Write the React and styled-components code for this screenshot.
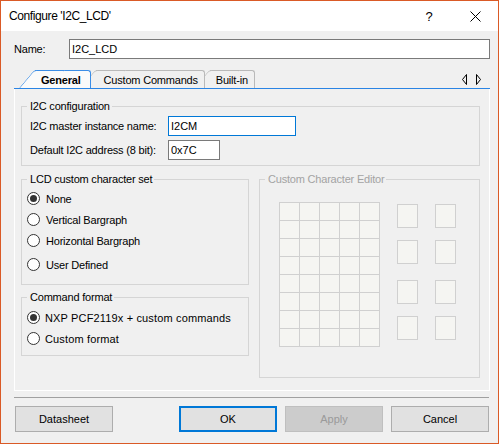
import React from 'react';
import styled, { createGlobalStyle, css } from 'styled-components';

const GlobalStyle = createGlobalStyle`
  html, body { margin: 0; padding: 0; background: #fff; }
  body {
    font-family: "Liberation Sans", Arial, sans-serif;
    font-size: 11px;
    color: #000;
  }
  * { box-sizing: border-box; }
`;

const Window = styled.div`
  width: 499px;
  height: 444px;
  border: 1px solid #da5a26;
  display: flex;
  flex-direction: column;
  background: #f0f0f0;
`;

const TitleBar = styled.div`
  height: 30px;
  flex: none;
  background: #fff;
  display: flex;
  align-items: center;
  padding-left: 8px;
`;

const Title = styled.span`
  flex: 1;
  font-size: 12px;
  letter-spacing: -0.4px;
`;

const CaptionButton = styled.div`
  width: 46px;
  height: 30px;
  display: flex;
  align-items: center;
  justify-content: center;
  font-size: 13px;
`;

const Body = styled.div`
  flex: 1;
  display: flex;
  flex-direction: column;
  padding: 8px 8px 0 13px;
`;

const NameRow = styled.div`
  display: flex;
  align-items: center;
  height: 20px;
`;

const NameLabel = styled.label`
  width: 55px;
  letter-spacing: -0.2px;
`;

const TextInput = styled.input`
  height: 20px;
  width: ${(p) => (p.$w ? `${p.$w}px` : 'auto')};
  flex: ${(p) => (p.$w ? 'none' : 1)};
  border: 1px solid ${(p) => (p.$focused ? '#0078d7' : '#7a7a7a')};
  background: #fff;
  padding: 0 2px;
  font: inherit;
  font-size: 11px;
  color: #000;
  outline: none;
`;

const TabStrip = styled.div`
  margin-top: 11px;
  display: flex;
  align-items: flex-end;
  padding-left: 21px;
  border-bottom: 1px solid #2a84e4;
`;

const Tab = styled.div`
  position: relative;
  z-index: ${(p) => p.$z};
  height: 18px;
  margin-left: ${(p) => p.$ml}px;
  padding: 0 ${(p) => p.$pr}px 0 ${(p) => p.$pl}px;
  display: flex;
  align-items: center;
  letter-spacing: -0.2px;
  font-weight: ${(p) => (p.$active ? 700 : 400)};
  background: ${(p) => (p.$active ? '#fafafa' : '#f0f0f0')};
  border-top: 1px solid ${(p) => (p.$active ? '#3b8de6' : '#b9b9b9')};
  border-right: 1px solid ${(p) => (p.$active ? '#3b8de6' : '#b9b9b9')};
  border-top-right-radius: 3px;

  &::before {
    content: '';
    position: absolute;
    z-index: -1;
    top: -1px;
    bottom: 0;
    left: -16px;
    width: 30px;
    background: inherit;
    border-left: 1px solid ${(p) => (p.$active ? '#3b8de6' : '#b9b9b9')};
    border-top: 1px solid ${(p) => (p.$active ? '#3b8de6' : '#b9b9b9')};
    border-top-left-radius: 3px;
    transform: skewX(-40deg);
    transform-origin: bottom left;
  }
`;

const TabArrows = styled.svg`
  margin-left: auto;
  margin-right: 8px;
  align-self: center;
  flex: none;
`;

const TabPage = styled.div`
  height: 302px;
  flex: none;
  border: 1px solid #fff;
  border-top: none;
  padding: 11px 9px 0 6px;
  display: grid;
  grid-template-columns: 228px 221px;
  column-gap: 10px;
  row-gap: 7px;
  align-content: start;
  align-items: start;
`;

const Group = styled.fieldset`
  margin: 0;
  min-width: 0;
  border: 1px solid #d5d5d5;
  padding: ${(p) => p.$pad};
  grid-column: ${(p) => (p.$span ? '1 / -1' : 'auto')};
`;

const Legend = styled.legend`
  padding: 0 2px 0 3px;
  line-height: 13px;
  letter-spacing: -0.2px;
  color: ${(p) => (p.$disabled ? '#a3a3a3' : '#000')};
`;

const FieldGrid = styled.div`
  display: grid;
  grid-template-columns: 138px auto;
  row-gap: 4px;
  align-items: center;
  padding-left: 3px;
`;

const FieldLabel = styled.label`
  letter-spacing: -0.2px;
`;

const LeftStack = styled.div`
  display: flex;
  flex-direction: column;
  gap: 6px;
`;

const RadioRow = styled.div`
  height: 21px;
  margin-top: ${(p) => p.$mt || 0}px;
  display: flex;
  align-items: center;
`;

const RadioDot = styled.span`
  position: relative;
  flex: none;
  width: 13px;
  height: 13px;
  border-radius: 50%;
  border: 1px solid #333;
  background: #fff;
  ${(p) =>
    p.$checked &&
    css`
      &::after {
        content: '';
        position: absolute;
        left: 2px;
        top: 2px;
        width: 7px;
        height: 7px;
        border-radius: 50%;
        background: #333;
      }
    `}
`;

const RadioText = styled.span`
  margin-left: ${(p) => (p.$wide ? 5 : 6)}px;
  letter-spacing: ${(p) => (p.$wide ? '0.15px' : '-0.2px')};
`;

const EditorBody = styled.div`
  display: flex;
  align-items: flex-start;
  padding-left: 14px;
`;

const CharGrid = styled.div`
  display: grid;
  grid-template-columns: repeat(5, 19px);
  grid-auto-rows: 17px;
  gap: 1px;
  border: 1px solid #d0d0d0;
  background: #d0d0d0;
`;

const Cell = styled.div`
  background: #f5f5f2;
`;

const BoxPanel = styled.div`
  margin-left: 17px;
  margin-top: 2px;
  display: flex;
  flex-direction: column;
`;

const BoxRow = styled.div`
  display: flex;
  gap: 17px;
  margin-top: ${(p) => p.$mt}px;
`;

const SmallBox = styled.div`
  width: 21px;
  height: 24px;
  border: 1px solid #d0d0d0;
  background: #f5f5f2;
`;

const Separator = styled.div`
  height: 1px;
  margin: 6px 1px 0 0;
  background: #a0a0a0;
`;

const ButtonRow = styled.div`
  margin-top: 8px;
  display: flex;
  gap: 8px;
  padding: 0 1px;
`;

const Button = styled.button`
  width: 98px;
  height: 26px;
  margin-left: ${(p) => (p.$push ? 'auto' : '0')};
  font: inherit;
  font-size: 11px;
  color: #000;
  background: #e1e1e1;
  border: 1px solid #adadad;
  padding: 0;
  ${(p) =>
    p.$default &&
    css`
      border: 2px solid #0078d7;
    `}
  &:disabled {
    background: #cccccc;
    border-color: #bfbfbf;
    color: #9a9a9a;
  }
`;

const lcdOptions = [
  { label: 'None', checked: true, mt: 0 },
  { label: 'Vertical Bargraph', mt: 0 },
  { label: 'Horizontal Bargraph', mt: 0 },
  { label: 'User Defined', mt: 3 },
];

const boxRowGaps = [0, 12, 16, 12];

export default function App() {
  return (
    <>
      <GlobalStyle />
      <Window>
        <TitleBar>
          <Title>Configure 'I2C_LCD'</Title>
          <CaptionButton>?</CaptionButton>
          <CaptionButton>
            <svg width="11" height="11" viewBox="0 0 11 11">
              <path d="M0.5 0.5 L10.5 10.5 M10.5 0.5 L0.5 10.5" stroke="#000" strokeWidth="1" fill="none" />
            </svg>
          </CaptionButton>
        </TitleBar>
        <Body>
          <NameRow>
            <NameLabel>Name:</NameLabel>
            <TextInput defaultValue="I2C_LCD" />
          </NameRow>

          <TabStrip>
            <Tab $active $z={3} $ml={0} $pl={6} $pr={9}>General</Tab>
            <Tab $z={2} $ml={5} $pl={8} $pr={6}>Custom Commands</Tab>
            <Tab $z={1} $ml={5} $pl={6} $pr={6}>Built-in</Tab>
            <TabArrows width="20" height="11" viewBox="0 0 20 11">
              <polygon points="4.5,0.5 0.5,5.5 4.5,10.5" fill="none" stroke="#000" />
              <polygon points="14.5,0.5 18.5,5.5 14.5,10.5" fill="none" stroke="#000" />
            </TabArrows>
          </TabStrip>

          <TabPage>
            <Group $span $pad="3px 0 5px 5px">
              <Legend>I2C configuration</Legend>
              <FieldGrid>
                <FieldLabel>I2C master instance name:</FieldLabel>
                <TextInput $w={128} $focused defaultValue="I2CM" />
                <FieldLabel>Default I2C address (8 bit):</FieldLabel>
                <TextInput $w={52} defaultValue="0x7C" />
              </FieldGrid>
            </Group>

            <LeftStack>
              <Group $pad="2px 0 9px 5px">
                <Legend>LCD custom character set</Legend>
                {lcdOptions.map((o) => (
                  <RadioRow key={o.label} $mt={o.mt}>
                    <RadioDot $checked={o.checked} />
                    <RadioText>{o.label}</RadioText>
                  </RadioRow>
                ))}
              </Group>
              <Group $pad="3px 0 6px 5px">
                <Legend>Command format</Legend>
                <RadioRow>
                  <RadioDot $checked />
                  <RadioText $wide>NXP PCF2119x + custom commands</RadioText>
                </RadioRow>
                <RadioRow>
                  <RadioDot />
                  <RadioText $wide>Custom format</RadioText>
                </RadioRow>
              </Group>
            </LeftStack>

            <Group $pad="16px 0 30px 5px">
              <Legend $disabled>Custom Character Editor</Legend>
              <EditorBody>
                <CharGrid>
                  {Array.from({ length: 40 }, (_, i) => (
                    <Cell key={i} />
                  ))}
                </CharGrid>
                <BoxPanel>
                  {boxRowGaps.map((mt, i) => (
                    <BoxRow key={i} $mt={mt}>
                      <SmallBox />
                      <SmallBox />
                    </BoxRow>
                  ))}
                </BoxPanel>
              </EditorBody>
            </Group>
          </TabPage>

          <Separator />

          <ButtonRow>
            <Button>Datasheet</Button>
            <Button $push $default>OK</Button>
            <Button disabled>Apply</Button>
            <Button>Cancel</Button>
          </ButtonRow>
        </Body>
      </Window>
    </>
  );
}
